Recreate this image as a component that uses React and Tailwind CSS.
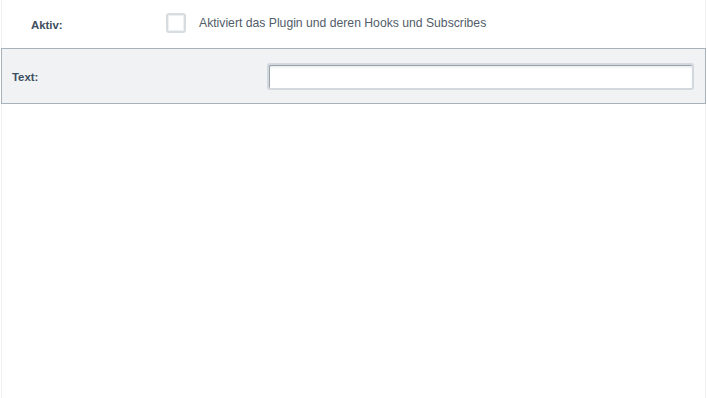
export default function App() {
  return (
    <div className="w-[707px] h-[398px] bg-white" style={{ fontFamily: '"Liberation Sans", Arial, sans-serif' }}>
      <div className="ml-px w-[705px] h-[398px] border-x border-[#f0f1f2]">
        <div className="h-[48px] flex items-center pb-[2px]">
          <div className="w-[164px] pl-[29px] pt-[6px] text-[11.4px] font-bold text-[#3d4e60]">Aktiv:</div>
          <div className="w-[20px] h-[20px] rounded-[3px] border-2 border-[#d7dce1] bg-white shadow-[inset_0_0_0_1px_#eef0f2]"></div>
          <div className="ml-[13px] text-[12.2px] text-[#515c69]">Aktiviert das Plugin und deren Hooks und Subscribes</div>
        </div>
        <div className="-mx-px h-[56px] flex items-center border border-[#a7b2bb] bg-[#f0f2f4]">
          <div className="w-[265px] pl-[10px] pt-[3px] text-[11.4px] font-bold text-[#3d4e60]">Text:</div>
          <div className="w-[427px] h-[27px] mt-[1px] rounded-[3px] border-2 border-[#d3d8de] bg-white shadow-[inset_1px_1px_0_#9aa4ad,inset_0_3px_3px_-1px_#e3e6ea]"></div>
        </div>
      </div>
    </div>
  );
}
